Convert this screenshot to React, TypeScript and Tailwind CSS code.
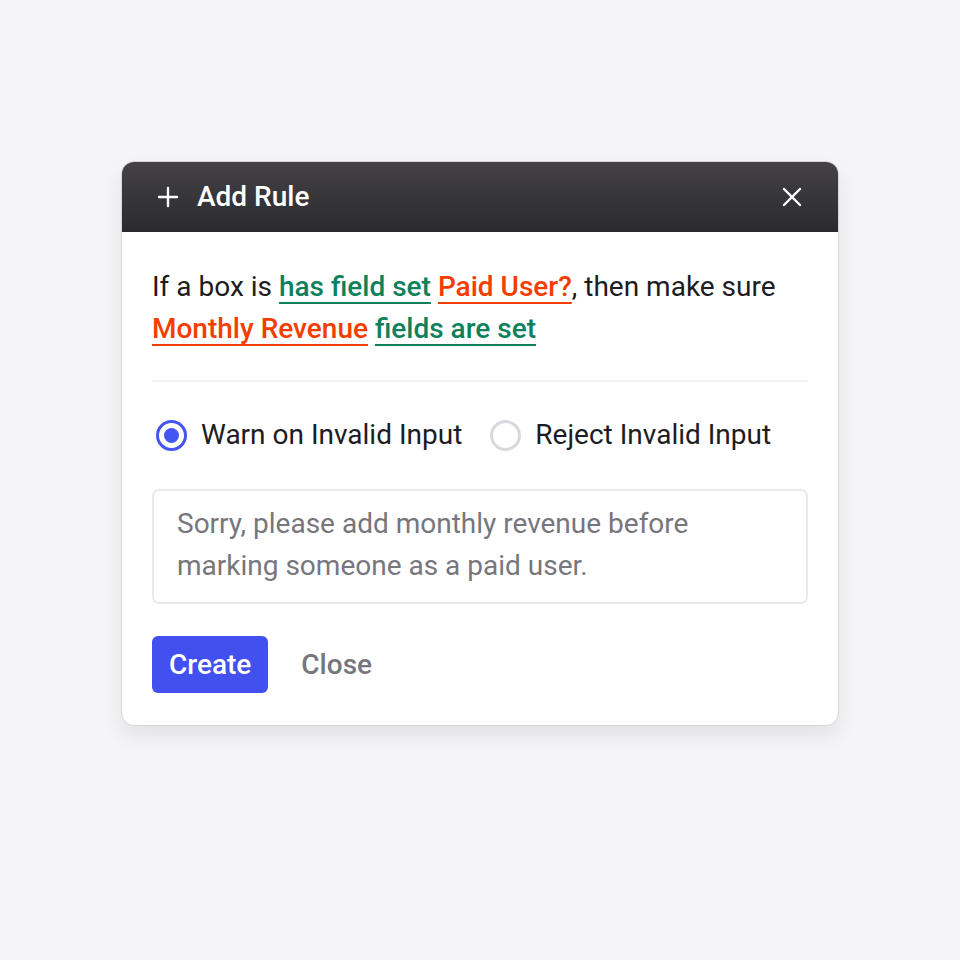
import React from 'react';

function PlusIcon() {
  return (
    <svg width="22" height="22" viewBox="0 0 22 22" fill="none" stroke="currentColor" strokeWidth="2.4" strokeLinecap="round">
      <path d="M11 2v18M2 11h18" />
    </svg>
  );
}

function CloseIcon() {
  return (
    <svg width="20" height="20" viewBox="0 0 20 20" fill="none" stroke="currentColor" strokeWidth="2.4" strokeLinecap="round">
      <path d="M2 2l16 16M18 2L2 18" />
    </svg>
  );
}

function Radio({ checked, label }: { checked?: boolean; label: string }) {
  return (
    <label className="flex items-center gap-[14px] cursor-pointer">
      {checked ? (
        <span className="w-[31px] h-[31px] rounded-full border-[3px] border-[#4555f2] flex items-center justify-center">
          <span className="w-[15px] h-[15px] rounded-full bg-[#4555f2]" />
        </span>
      ) : (
        <span className="w-[31px] h-[31px] rounded-full border-[3px] border-[#d9d8dd]" />
      )}
      <span className="text-[#1d1c22]">{label}</span>
    </label>
  );
}

const link = 'font-medium underline underline-offset-[6px] decoration-[2px]';

export default function App() {
  return (
    <div
      className="min-h-screen w-full bg-[#f5f4f7] flex items-start justify-center pt-[161px]"
      style={{ fontFamily: 'Roboto, "Noto Sans", sans-serif' }}
    >
      <div className="w-[718px] rounded-[13px] border border-[#d6d5da] bg-white overflow-hidden shadow-[0_10px_20px_rgba(0,0,0,0.08)]">
        {/* Header */}
        <div className="h-[70px] bg-gradient-to-b from-[#444247] to-[#2b2a2d] flex items-center justify-between pl-[35px] pr-[36px] text-white">
          <div className="flex items-center gap-[18px]">
            <PlusIcon />
            <span className="text-[28px] font-medium">Add Rule</span>
          </div>
          <button className="text-white">
            <CloseIcon />
          </button>
        </div>

        {/* Body */}
        <div className="px-[30px] pt-[34px] pb-[32px] text-[28px] leading-[42px]">
          <p className="text-[#1d1c22]">
            If a box is{' '}
            <span className={`text-[#0f7f5c] ${link}`}>has field set</span>{' '}
            <span className={`text-[#f43d00] ${link}`}>Paid User?</span>, then make sure{' '}
            <span className={`text-[#f43d00] ${link}`}>Monthly Revenue</span>{' '}
            <span className={`text-[#0f7f5c] ${link}`}>fields are set</span>
          </p>

          <div className="h-[2px] bg-[#f1f0f3] mt-[30px]" />

          <div className="flex items-center gap-[28px] mt-[32px] pl-[4px]">
            <Radio checked label="Warn on Invalid Input" />
            <Radio label="Reject Invalid Input" />
          </div>

          <div className="mt-[33px] h-[115px] rounded-[7px] border-2 border-[#eae9ed] pl-[23px] pr-[100px] pt-[12px] text-[#77767d]">
            Sorry, please add monthly revenue before marking someone as a paid user.
          </div>

          <div className="flex items-center gap-[33px] mt-[32px]">
            <button className="h-[57px] px-[17px] rounded-[6px] bg-[#4150ee] text-white text-[28px] font-medium">
              Create
            </button>
            <button className="text-[#77767d] text-[28px] font-medium">Close</button>
          </div>
        </div>
      </div>
    </div>
  );
}
